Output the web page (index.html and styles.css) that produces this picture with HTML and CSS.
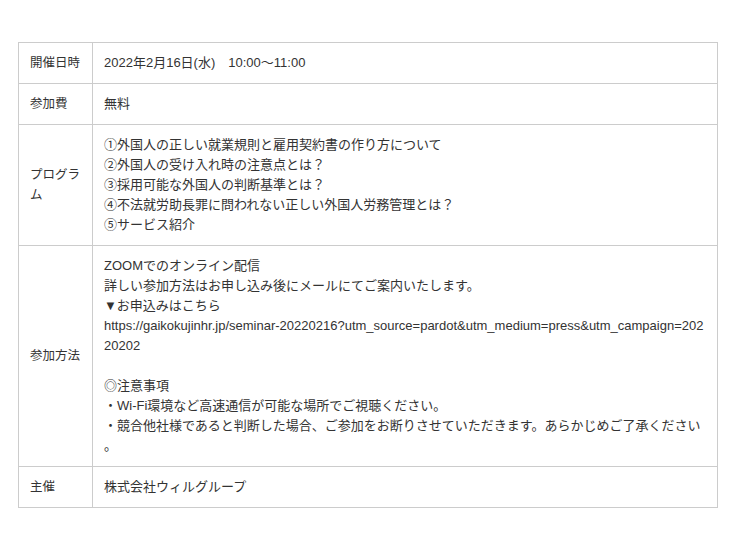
FILE: index.html
```html
<!DOCTYPE html>
<html lang="ja">
<head>
    <meta charset="UTF-8">
    <meta name="viewport" content="width=device-width, initial-scale=1.0">
    <title>セミナー概要</title>
    <link rel="stylesheet" href="styles.css">
</head>
<body>
    <!-- セミナー概要テーブル -->
    <table class="info-table">
        <tbody>
            <tr>
                <th>開催日時</th>
                <td>2022年2月16日(水)　10:00～11:00</td>
            </tr>
            <tr>
                <th>参加費</th>
                <td>無料</td>
            </tr>
            <tr>
                <th>プログラム</th>
                <td>
                    ①外国人の正しい就業規則と雇用契約書の作り方について<br>
                    ②外国人の受け入れ時の注意点とは？<br>
                    ③採用可能な外国人の判断基準とは？<br>
                    ④不法就労助長罪に問われない正しい外国人労務管理とは？<br>
                    ⑤サービス紹介
                </td>
            </tr>
            <tr>
                <th>参加方法</th>
                <td class="long">ZOOMでのオンライン配信<br>詳しい参加方法はお申し込み後にメールにてご案内いたします。<br>▼お申込みはこちら<br>https://gaikokujinhr.jp/seminar-20220216?utm_source=pardot&amp;utm_medium=press&amp;utm_campaign=20220202<br><br>◎注意事項<br>・Wi-Fi環境など高速通信が可能な場所でご視聴ください。<br>・競合他社様であると判断した場合、ご参加をお断りさせていただきます。あらかじめご了承ください。</td>
            </tr>
            <tr>
                <th>主催</th>
                <td>株式会社ウィルグループ</td>
            </tr>
        </tbody>
    </table>
</body>
</html>
```

FILE: styles.css
```css
/* セミナー概要 */
body {
    margin: 0;
    padding: 42px 22px 0 18px;
    background: #fff;
    font-family: 'Liberation Sans', Arial, 'Noto Sans CJK JP', sans-serif;
    font-size: 13px;
    line-height: 20px;
    color: #333;
}
.info-table {
    width: 700px;
    border-collapse: collapse;
    table-layout: fixed;
}
.info-table th,
.info-table td {
    border: 1px solid #ccc;
    padding: 10px 11px;
    text-align: left;
    font-weight: normal;
}
.info-table th {
    width: 51px;
    font-size: 12.5px;
    vertical-align: middle;
}
.info-table td {
    vertical-align: top;
}
.info-table td.long {
    word-break: break-all;
    line-break: anywhere;
}
```
